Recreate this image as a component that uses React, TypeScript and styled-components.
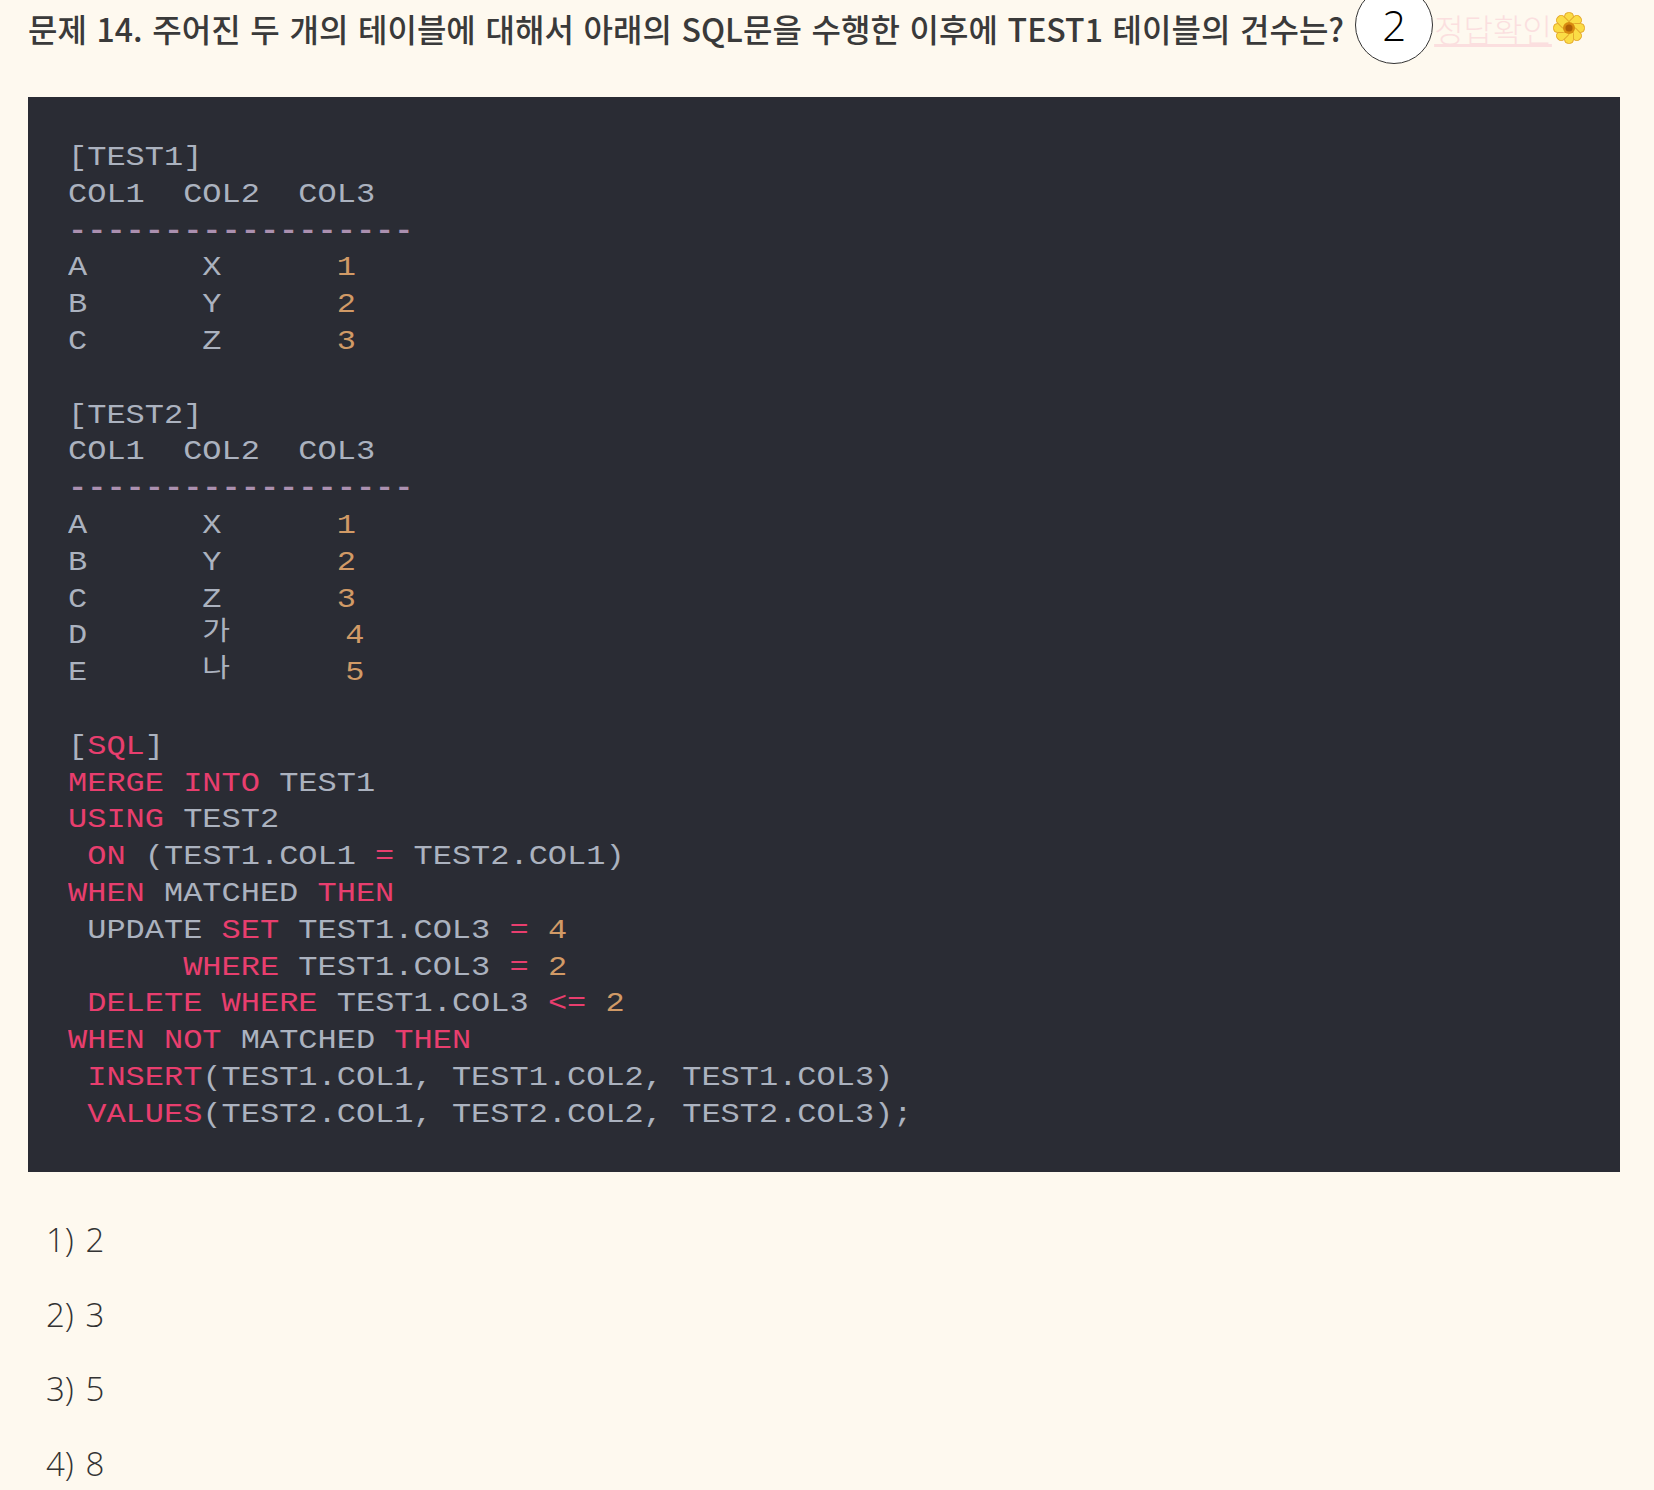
import { FC, ReactNode } from "react";
import styled, { createGlobalStyle } from "styled-components";

const GlobalStyle = createGlobalStyle`
  html, body {
    margin: 0;
    padding: 0;
    background: #fef9ef;
  }
`;

const Page = styled.div`
  width: 1654px;
  height: 1490px;
  overflow: hidden;
  box-sizing: border-box;
  padding: 0 34px 0 28px;
  color: #333;
`;

const Question = styled.h3`
  display: flex;
  align-items: center;
  margin: 0;
  height: 56px;
  white-space: nowrap;
  font-family: "Noto Sans CJK KR", "Noto Sans", sans-serif;
  font-size: 32px;
  font-weight: 500;
  word-spacing: 2.5px;
  color: #3a3a3a;
`;

const AnswerCircle = styled.span`
  flex: none;
  display: flex;
  align-items: center;
  justify-content: center;
  box-sizing: border-box;
  width: 78px;
  height: 78px;
  margin: 0 0 7px 11px;
  border: 1.5px solid #333;
  border-radius: 50%;
  background: #fff;
  font-family: "Open Sans", sans-serif;
  font-size: 42px;
  font-weight: 300;
  color: #000;
`;

const AnswerLink = styled.a`
  margin-left: 1px;
  font-weight: 300;
  color: #fbdfdf;
  text-decoration: underline;
`;

const Flower = styled.svg`
  flex: none;
  width: 32px;
  height: 32px;
  margin-left: 1px;
`;

const CodeBlock = styled.pre`
  margin: 41px 0 0;
  padding: 43px 40px 40px;
  height: 1075px;
  box-sizing: border-box;
  overflow: hidden;
  background: #2a2c34;
`;

const Code = styled.code`
  display: block;
  transform: scaleX(1.163);
  transform-origin: left top;
  font-family: "Liberation Mono", monospace;
  font-size: 27.5px;
  line-height: 36.8px;
  color: #abb2bf;
`;

const Keyword = styled.span`
  color: #e83e6e;
`;

const Num = styled.span`
  color: #d19a66;
`;

const Rule = styled.span`
  font-weight: 700;
  color: #ab90b0;
`;

const Hangul = styled.span`
  font-family: "Noto Sans CJK KR", sans-serif;
  font-size: 26px;
  line-height: 0;
  vertical-align: 3px;
`;

const Options = styled.div`
  display: flex;
  flex-direction: column;
  gap: 38.5px;
  padding: 50px 0 0 18px;
`;

const Option = styled.p`
  margin: 0;
  font-family: "Open Sans", sans-serif;
  font-size: 33px;
  line-height: 36px;
  font-weight: 300;
  word-spacing: 3px;
  color: #333;
`;

const K: FC<{ children: ReactNode }> = ({ children }) => <Keyword>{children}</Keyword>;
const N: FC<{ children: ReactNode }> = ({ children }) => <Num>{children}</Num>;

const PETALS = [0, 45, 90, 135, 180, 225, 270, 315];

const App: FC = () => (
  <Page>
    <GlobalStyle />
    <Question>
      문제 14. 주어진 두 개의 테이블에 대해서 아래의 SQL문을 수행한 이후에 TEST1 테이블의 건수는?
      <AnswerCircle>2</AnswerCircle>
      <AnswerLink>정답확인</AnswerLink>
      <Flower viewBox="0 0 32 32">
        {PETALS.map((deg) => (
          <rect
            key={deg}
            x="11.5"
            y="0.5"
            width="9"
            height="14"
            rx="4"
            fill="#fbdc45"
            stroke="#e5a92c"
            strokeWidth="1"
            transform={`rotate(${deg} 16 16)`}
          />
        ))}
        <circle cx="16" cy="16" r="6" fill="#d98a10" />
        <circle cx="16" cy="16" r="3.5" fill="#b05f06" />
      </Flower>
    </Question>
    <CodeBlock>
      <Code>
        {"[TEST1]\nCOL1  COL2  COL3\n"}
        <Rule>{"------------------"}</Rule>
        {"\nA      X      "}<N>1</N>
        {"\nB      Y      "}<N>2</N>
        {"\nC      Z      "}<N>3</N>
        {"\n\n[TEST2]\nCOL1  COL2  COL3\n"}
        <Rule>{"------------------"}</Rule>
        {"\nA      X      "}<N>1</N>
        {"\nB      Y      "}<N>2</N>
        {"\nC      Z      "}<N>3</N>
        {"\nD      "}<Hangul>가</Hangul>{"      "}<N>4</N>
        {"\nE      "}<Hangul>나</Hangul>{"      "}<N>5</N>
        {"\n\n["}<K>SQL</K>{"]\n"}
        <K>MERGE</K>{" "}<K>INTO</K>{" TEST1\n"}
        <K>USING</K>{" TEST2\n "}
        <K>ON</K>{" (TEST1.COL1 "}<K>=</K>{" TEST2.COL1)\n"}
        <K>WHEN</K>{" MATCHED "}<K>THEN</K>
        {"\n UPDATE "}<K>SET</K>{" TEST1.COL3 "}<K>=</K>{" "}<N>4</N>
        {"\n      "}<K>WHERE</K>{" TEST1.COL3 "}<K>=</K>{" "}<N>2</N>
        {"\n "}<K>DELETE</K>{" "}<K>WHERE</K>{" TEST1.COL3 "}<K>{"<="}</K>{" "}<N>2</N>
        {"\n"}<K>WHEN</K>{" "}<K>NOT</K>{" MATCHED "}<K>THEN</K>
        {"\n "}<K>INSERT</K>{"(TEST1.COL1, TEST1.COL2, TEST1.COL3)\n "}
        <K>VALUES</K>{"(TEST2.COL1, TEST2.COL2, TEST2.COL3);"}
      </Code>
    </CodeBlock>
    <Options>
      <Option>1) 2</Option>
      <Option>2) 3</Option>
      <Option>3) 5</Option>
      <Option>4) 8</Option>
    </Options>
  </Page>
);

export default App;
